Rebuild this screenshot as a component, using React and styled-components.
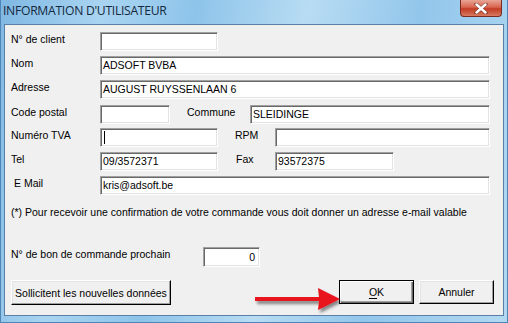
import React from "react";
import styled, { createGlobalStyle } from "styled-components";

const Global = createGlobalStyle`
  html, body { margin: 0; padding: 0; }
  body { width: 508px; height: 323px; overflow: hidden; background: #fff; }
`;

const Window = styled.div`
  position: relative;
  width: 508px;
  height: 323px;
  box-sizing: border-box;
  display: flex;
  flex-direction: column;
  padding: 0 3px 6px 3px;
  background: linear-gradient(100deg, #7fb8e3 0%, #a9d4f1 18%, #8ec4ea 35%, #b8dcf3 55%, #92c6eb 75%, #b3d9f2 100%);
  border-left: 1px solid #4f86b8;
  border-right: 1px solid #4f86b8;
  border-bottom: 1px solid #4f86b8;
`;

const TitleBar = styled.div`
  height: 24px;
  display: flex;
  align-items: center;
  justify-content: space-between;
  flex-shrink: 0;
`;

const Title = styled.span`
  font-family: "Open Sans", "Noto Sans", sans-serif;
  font-size: 12.2px;
  color: #14283c;
  letter-spacing: -0.3px;
  margin-left: -1px;
  margin-bottom: 3px;
`;

const CloseButton = styled.div`
  align-self: flex-start;
  width: 42px;
  height: 17px;
  margin-right: 2px;
  box-sizing: border-box;
  border: 1px solid #7a2c22;
  border-top: none;
  border-radius: 0 0 4px 4px;
  background: linear-gradient(#e8a595 0%, #d8654f 45%, #c23b24 55%, #d87a60 100%);
  display: flex;
  align-items: center;
  justify-content: center;
`;

const Panel = styled.div`
  flex: 1;
  background: #f0f0f0;
  border: 1px solid #5a7fa6;
  box-sizing: border-box;
  padding: 7px 0 0 6px;
  position: relative;
  font-family: "Liberation Sans", Arial, sans-serif;
  font-size: 10.5px;
  color: #000;
  display: flex;
  flex-direction: column;
`;

const Row = styled.div`
  display: flex;
  align-items: flex-start;
  height: 19px;
  margin-bottom: ${(p) => p.$gap ?? 5}px;
`;

const Label = styled.span`
  width: ${(p) => p.$w}px;
  margin-left: ${(p) => p.$ml ?? 0}px;
  padding-left: ${(p) => p.$pl ?? 0}px;
  box-sizing: border-box;
  line-height: 15px;
  white-space: nowrap;
  flex-shrink: 0;
`;

const Field = styled.div`
  width: ${(p) => p.$w}px;
  height: ${(p) => p.$h ?? 19}px;
  box-sizing: border-box;
  background: #fff;
  border-top: 1px solid #a0a0a0;
  border-left: 1px solid #a0a0a0;
  border-right: 1px solid #fff;
  border-bottom: 1px solid #fff;
  box-shadow: inset 1px 1px 0 #696969, inset -1px -1px 0 #e3e3e3;
  padding: 0 4px 0 2px;
  line-height: 17px;
  white-space: nowrap;
  overflow: hidden;
  flex-shrink: 0;
  display: flex;
  align-items: center;
  justify-content: ${(p) => (p.$right ? "flex-end" : "flex-start")};
`;

const Caret = styled.span`
  display: inline-block;
  width: 1px;
  height: 13px;
  margin-left: 1px;
  background: #000;
`;

const Note = styled.div`
  line-height: 15px;
  margin-top: 10px;
  white-space: nowrap;
`;

const OrderRow = styled.div`
  display: flex;
  align-items: flex-start;
  margin-top: 27px;
  height: 20px;
`;

const ButtonRow = styled.div`
  display: flex;
  align-items: flex-start;
  margin-top: 13px;
`;

const Button = styled.div`
  width: ${(p) => p.$w}px;
  height: ${(p) => p.$h ?? 24}px;
  margin-left: ${(p) => p.$ml ?? 0}px;
  box-sizing: border-box;
  background: #f0f0f0;
  border-top: 1px solid ${(p) => (p.$default ? "#000" : "#fff")};
  border-left: 1px solid ${(p) => (p.$default ? "#000" : "#fff")};
  border-right: 1px solid #000;
  border-bottom: 1px solid #000;
  box-shadow: ${(p) =>
    p.$default
      ? "inset 1px 1px 0 #fff, inset -1px -1px 0 #696969, inset -2px -2px 0 #a0a0a0"
      : "inset -1px -1px 0 #a0a0a0, inset 1px 1px 0 #e3e3e3"};
  display: flex;
  align-items: center;
  justify-content: center;
  white-space: nowrap;
  flex-shrink: 0;
`;

const Underline = styled.span`
  text-decoration: underline;
  text-underline-offset: 2px;
`;

const Arrow = styled.svg`
  position: absolute;
  left: 245px;
  top: 260px;
  overflow: visible;
`;

export default function App() {
  return (
    <>
      <Global />
      <Window>
        <TitleBar>
          <Title>INFORMATION D'UTILISATEUR</Title>
          <CloseButton>
            <svg width="14" height="11" viewBox="0 0 14 11">
              <path d="M2 1 L12 10 M12 1 L2 10" stroke="#3b1a14" strokeWidth="3.6" strokeLinecap="round" opacity="0.55" />
              <path d="M2.5 1.5 L11.5 9.5 M11.5 1.5 L2.5 9.5" stroke="#fff" strokeWidth="2.4" strokeLinecap="round" />
            </svg>
          </CloseButton>
        </TitleBar>
        <Panel>
          <Row>
            <Label $w={89}>N° de client</Label>
            <Field $w={118} />
          </Row>
          <Row>
            <Label $w={89}>Nom</Label>
            <Field $w={390}>ADSOFT BVBA</Field>
          </Row>
          <Row $gap={6}>
            <Label $w={89}>Adresse</Label>
            <Field $w={390}>AUGUST RUYSSENLAAN 6</Field>
          </Row>
          <Row $gap={4}>
            <Label $w={89}>Code postal</Label>
            <Field $w={70} />
            <Label $w={63} $ml={17}>Commune</Label>
            <Field $w={240}>SLEIDINGE</Field>
          </Row>
          <Row>
            <Label $w={89}>Numéro TVA</Label>
            <Field $w={118}><Caret /></Field>
            <Label $w={40} $ml={17}>RPM</Label>
            <Field $w={215} />
          </Row>
          <Row>
            <Label $w={89}>Tel</Label>
            <Field $w={118}>09/3572371</Field>
            <Label $w={40} $ml={17} $pl={1}>Fax</Label>
            <Field $w={119}>93572375</Field>
          </Row>
          <Row $gap={0}>
            <Label $w={89} $pl={3}>E Mail</Label>
            <Field $w={390}>kris@adsoft.be</Field>
          </Row>
          <Note>(*) Pour recevoir une confirmation de votre commande vous doit donner un adresse e-mail valable</Note>
          <OrderRow>
            <Label $w={192}>N° de bon de commande prochain</Label>
            <Field $w={57} $h={20} $right>0</Field>
          </OrderRow>
          <ButtonRow>
            <Button $w={160} $h={25}>Sollicitent les nouvelles données</Button>
            <Button $w={75} $ml={168} $default>
              <Underline>O</Underline>K
            </Button>
            <Button $w={75} $ml={5}>Annuler</Button>
          </ButtonRow>
          <Arrow width="92" height="30" viewBox="0 0 92 30">
            <defs>
              <filter id="sh" x="-20%" y="-50%" width="140%" height="200%">
                <feDropShadow dx="2" dy="3" stdDeviation="1.5" floodColor="#000" floodOpacity="0.45" />
              </filter>
            </defs>
            <path d="M5 12 L69 12 L68 3 L90 14 L68 25 L69 16 L5 16 Z" fill="#e8141b" filter="url(#sh)" />
          </Arrow>
        </Panel>
      </Window>
    </>
  );
}
